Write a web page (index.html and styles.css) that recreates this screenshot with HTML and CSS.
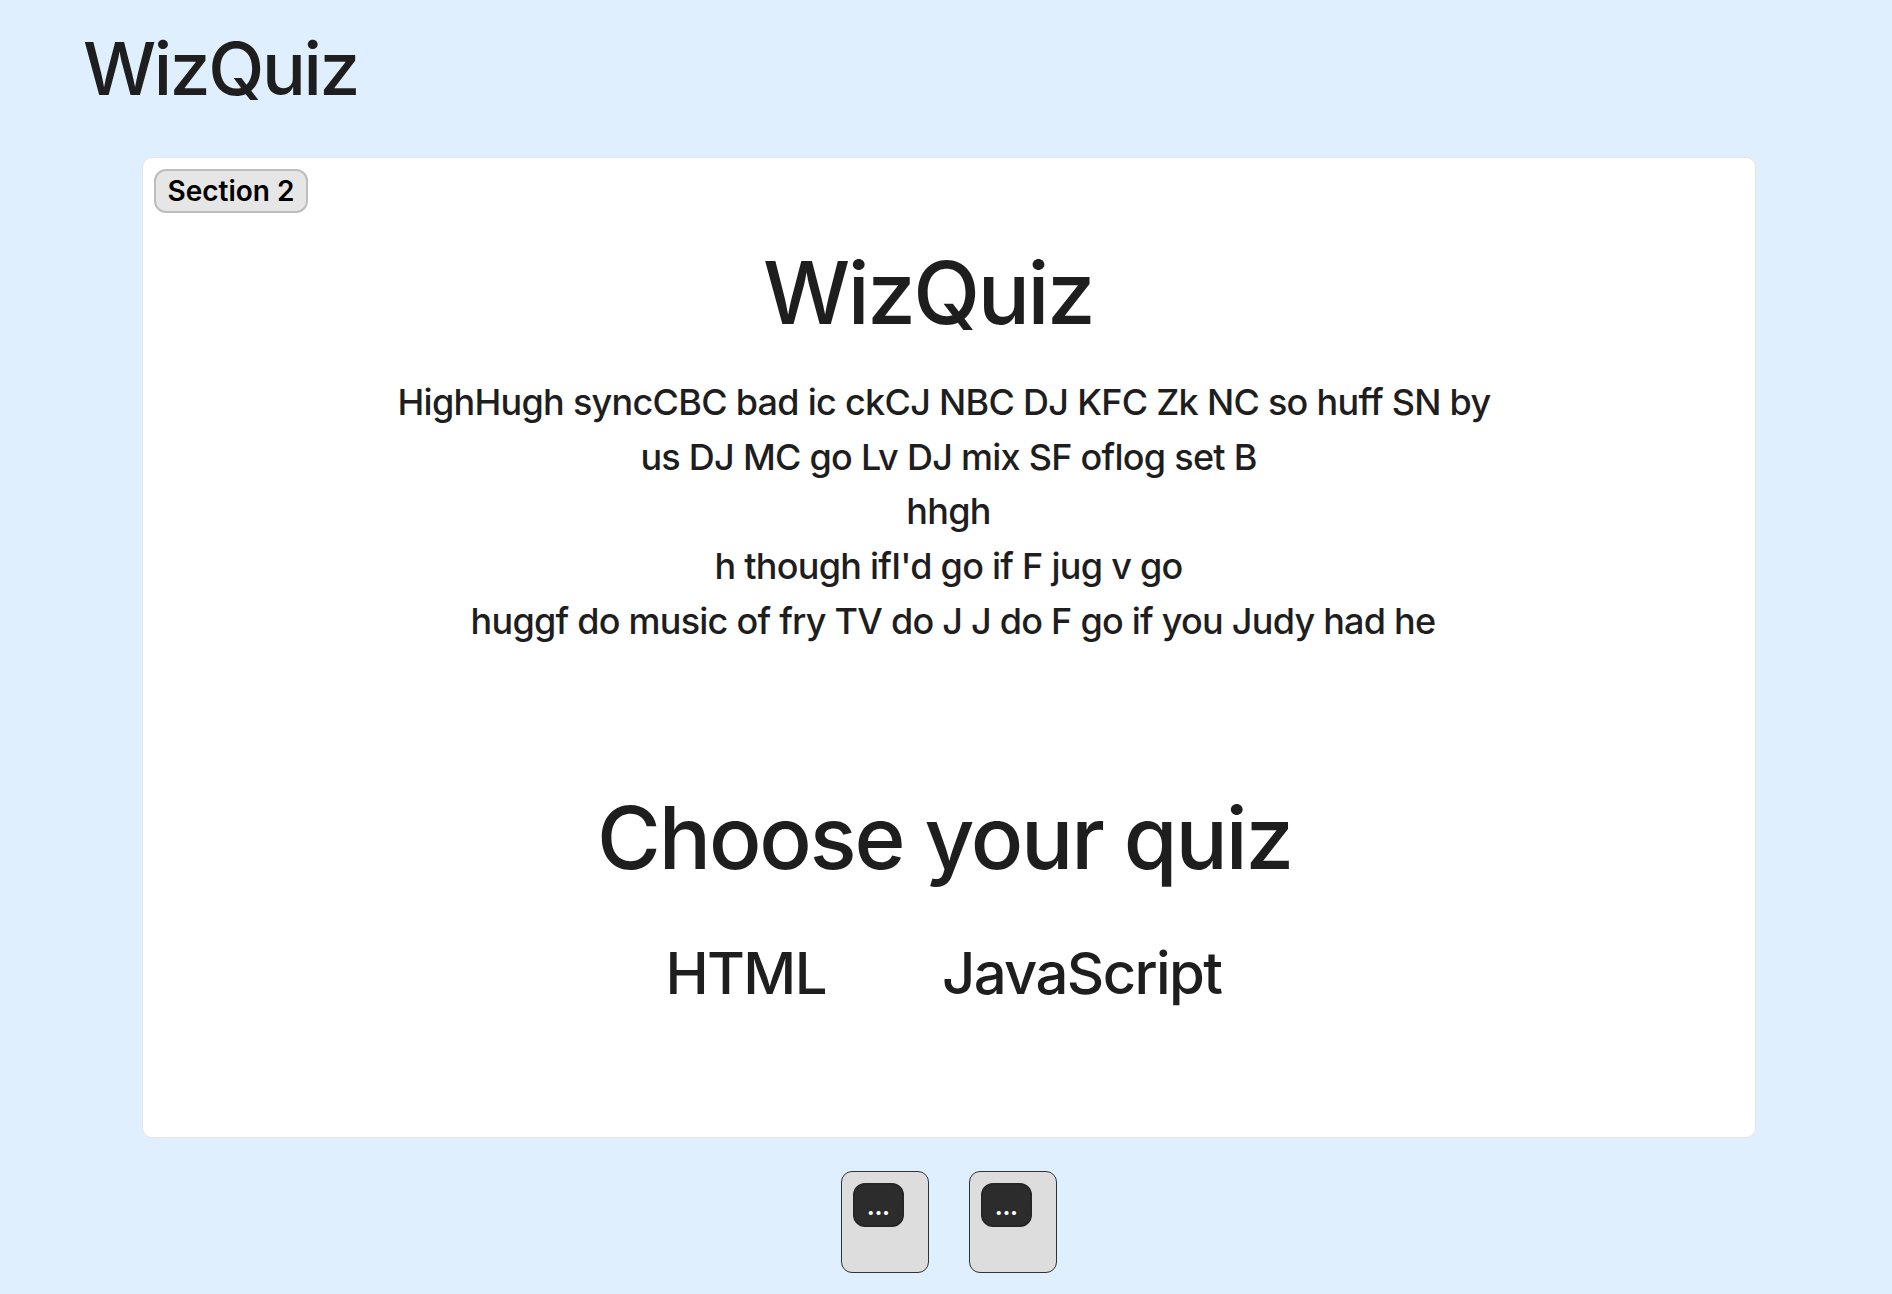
FILE: index.html
```html
<!DOCTYPE html>
<html lang="en">
<head>
<meta charset="utf-8">
<title>WizQuiz</title>
<link rel="stylesheet" href="styles.css">
</head>
<body>
<header class="brand">WizQuiz</header>
<main class="board">
  <div class="tag">Section 2</div>
  <h1 class="title">WizQuiz</h1>
  <div class="intro">
    <p class="lead">HighHugh syncCBC bad ic ckCJ NBC DJ KFC Zk NC so huff SN by</p>
    <p>us DJ MC go Lv DJ mix SF oflog set B</p>
    <p>hhgh</p>
    <p>h though ifI'd go if F jug v go</p>
    <p class="last">huggf do music of fry TV do J J do F go if you Judy had he</p>
  </div>
  <h2 class="choose">Choose your quiz</h2>
  <nav class="options"><span>HTML</span><span>JavaScript</span></nav>
</main>
<footer class="cards">
  <div class="card"><div class="chip">...</div></div>
  <div class="card"><div class="chip">...</div></div>
</footer>
</body>
</html>
```
FILE: styles.css
```css
* { box-sizing: border-box; }
body { margin: 0; height: 1294px; overflow: hidden; background: #dfeffe; color: #1e1e1e; font-family: Inter, sans-serif; font-weight: 500; }
h1, h2, p { margin: 0; font-weight: 500; white-space: nowrap; }
.brand { height: 157px; padding: 25px 0 0 83px; font-size: 73px; line-height: 88px; letter-spacing: -2.4px; }
.board { width: 1614px; height: 981px; margin-left: 142px; padding: 11px; background: #fff; border: 1px solid #e6e6e6; border-radius: 10px; text-align: center; }
.tag { width: 154px; height: 44px; border: 2px solid #bdbdbd; border-radius: 12px; background: #e6e6e6; color: #000; font-size: 28px; line-height: 40px; font-weight: 600; }
.title { margin: 27px 42px 0 0; font-size: 87px; line-height: 106px; letter-spacing: -2.5px; }
.intro { margin: 29px 1px 0 0; font-size: 36px; line-height: 54.7px; letter-spacing: -.74px; }
.lead { margin-right: 9px; letter-spacing: -.72px; }
.last { margin-left: 9px; letter-spacing: -.76px; }
.choose { margin: 136px 9px 0 0; font-size: 87px; line-height: 106px; letter-spacing: -2.15px; }
.options { display: flex; justify-content: center; gap: 116px; margin: 47px 11px 0 0; font-size: 58px; line-height: 70px; letter-spacing: -1.6px; }
.cards { display: flex; gap: 40px; margin: 33px 0 0 841px; }
.card { width: 88px; height: 102px; padding: 11px; background: #ddd; border: 1px solid #333; border-radius: 11px; }
.chip { width: 51px; height: 44px; border: 2px solid #262626; border-radius: 12px; background: #2c2c2c; color: #fff; font-size: 28px; line-height: 40px; letter-spacing: -.8px; text-align: center; padding-right: 1px; }
```
